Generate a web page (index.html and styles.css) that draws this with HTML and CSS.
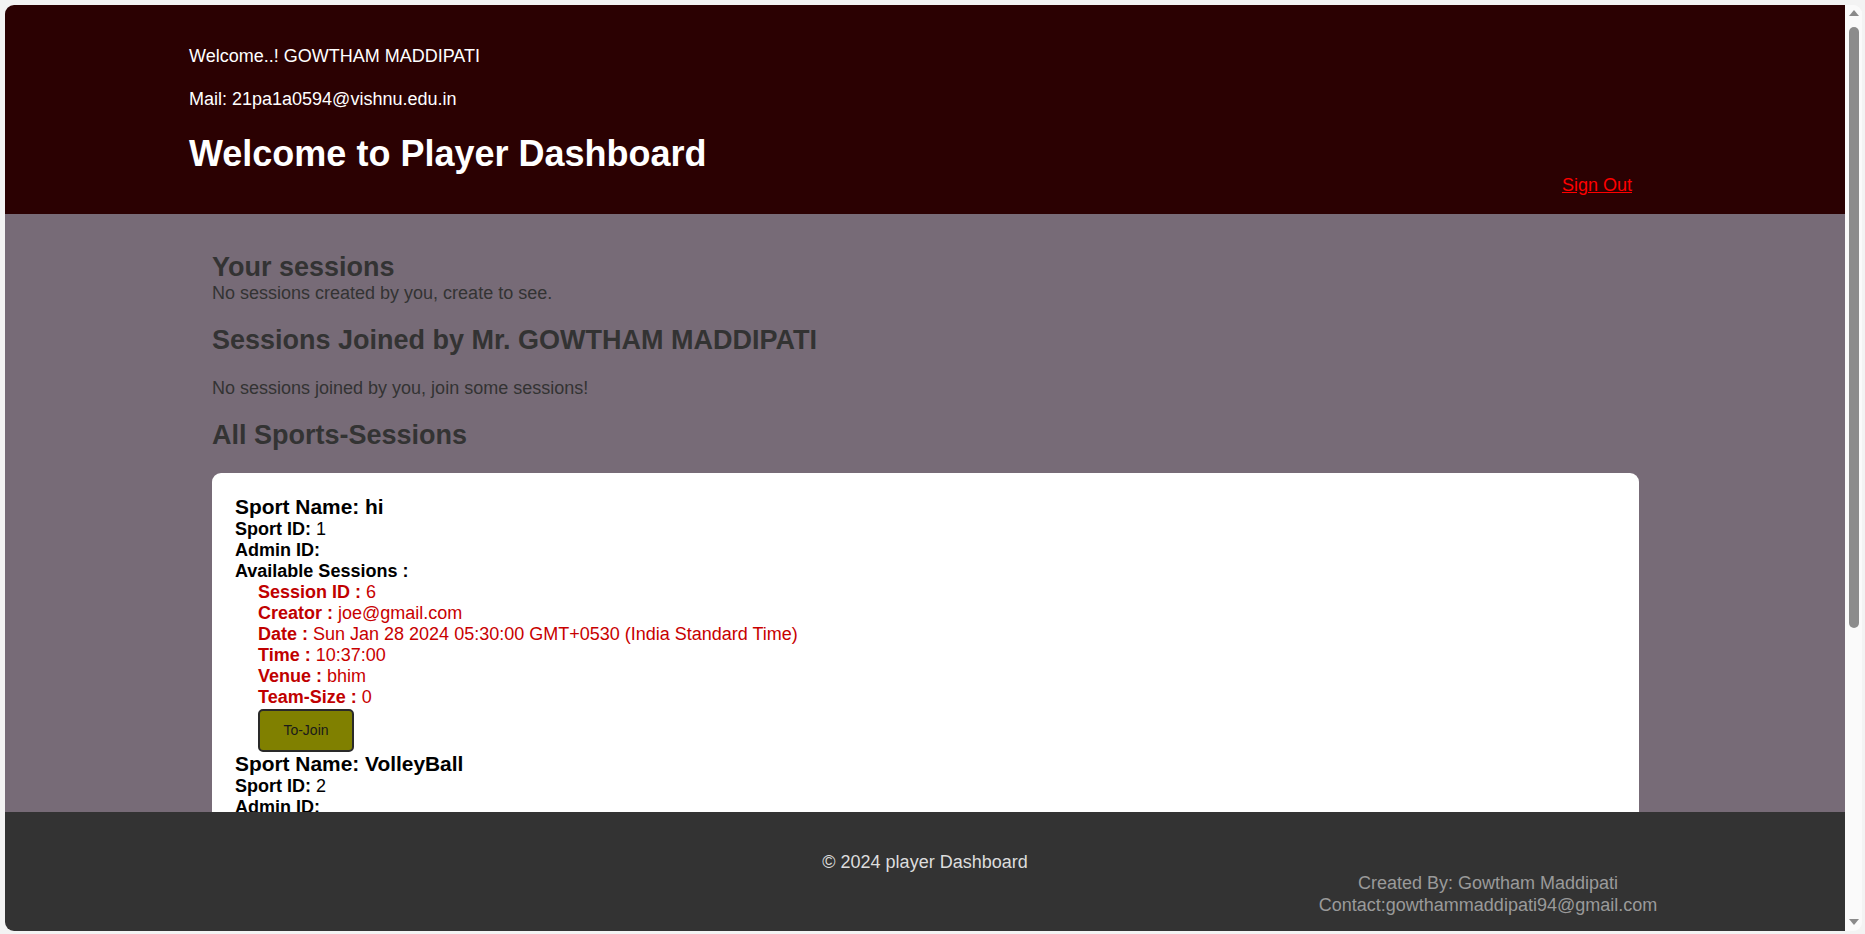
FILE: index.html
```html
<!DOCTYPE html>
<html lang="en">
<head>
<meta charset="utf-8">
<title>Player Dashboard</title>
<link rel="stylesheet" href="styles.css">
</head>
<body>
<div class="window">
  <div class="page">
    <header class="top">
      <div class="top-left">
        <p class="hello">Welcome..! GOWTHAM MADDIPATI</p>
        <p class="mail">Mail: 21pa1a0594@vishnu.edu.in</p>
        <h1 class="title">Welcome to Player Dashboard</h1>
      </div>
      <a class="signout" href="#">Sign Out</a>
    </header>
    <main class="main">
      <h2 class="sec-title">Your sessions</h2>
      <div class="sec-text">No sessions created by you, create to see.</div>
      <h2 class="sec-title">Sessions Joined by Mr. GOWTHAM MADDIPATI</h2>
      <p class="sec-para">No sessions joined by you, join some sessions!</p>
      <h2 class="sec-title">All Sports-Sessions</h2>
      <div class="card">
        <div class="sport">
          <h3 class="sport-name">Sport Name: hi</h3>
          <div class="line"><b>Sport ID:</b> 1</div>
          <div class="line"><b>Admin ID:</b></div>
          <div class="line"><b>Available Sessions :</b></div>
          <div class="sessions">
            <div class="s-line"><b>Session ID :</b> 6</div>
            <div class="s-line"><b>Creator :</b> joe@gmail.com</div>
            <div class="s-line"><b>Date :</b> Sun Jan 28 2024 05:30:00 GMT+0530 (India Standard Time)</div>
            <div class="s-line"><b>Time :</b> 10:37:00</div>
            <div class="s-line"><b>Venue :</b> bhim</div>
            <div class="s-line"><b>Team-Size :</b> 0</div>
            <button class="join" type="button">To-Join</button>
          </div>
        </div>
        <div class="sport">
          <h3 class="sport-name">Sport Name: VolleyBall</h3>
          <div class="line"><b>Sport ID:</b> 2</div>
          <div class="line"><b>Admin ID:</b></div>
          <div class="line"><b>Available Sessions :</b></div>
        </div>
      </div>
    </main>
    <footer class="foot">
      <p class="copy">&copy; 2024 player Dashboard</p>
      <div class="credit">
        <div>Created By: Gowtham Maddipati</div>
        <div>Contact:gowthammaddipati94@gmail.com</div>
      </div>
    </footer>
  </div>
  <div class="scrollbar">
    <span class="arrow-up"></span>
    <span class="thumb"></span>
    <span class="arrow-down"></span>
  </div>
</div>
</body>
</html>
```
FILE: styles.css
```css
html, body {
  margin: 0;
  padding: 0;
}
body {
  background: #f3f3f3;
  font-family: "Liberation Sans", Arial, sans-serif;
  font-size: 18px;
  width: 1865px;
  height: 934px;
  overflow: hidden;
}
.window {
  margin: 5px 0 0 5px;
  width: 1857px;
  height: 926px;
  border-radius: 9px;
  overflow: hidden;
  display: flex;
  background: #fafafa;
}
.page {
  width: 1840px;
  height: 926px;
  display: flex;
  flex-direction: column;
}
.top {
  background: #2b0102;
  height: 209px;
  box-sizing: border-box;
  padding: 41px 213px 18px 184px;
  display: flex;
  justify-content: space-between;
  align-items: flex-end;
  flex-shrink: 0;
}
.top-left {
  color: #ffffff;
}
.hello {
  margin: 0;
  font-size: 18px;
}
.mail {
  margin: 22px 0 0;
  font-size: 18px;
}
.title {
  margin: 23px 0 21px;
  font-size: 36px;
  font-weight: bold;
}
.signout {
  color: #ff0000;
  text-decoration: underline;
  font-size: 18px;
}
.main {
  flex: 1;
  overflow: hidden;
  background: #776b77;
  padding: 16px 206px 0 207px;
  color: #333333;
}
.sec-title {
  font-size: 27px;
  margin: 21.5px 0;
  font-weight: bold;
}
.sec-title:first-child {
  margin-bottom: 0;
}
.sec-text {
  font-size: 18px;
}
.sec-para {
  font-size: 18px;
  margin: 18px 0;
}
.card {
  background: #ffffff;
  border-radius: 9px;
  padding: 22px 22px 40px 23px;
  color: #000000;
}
.sport-name {
  margin: 0;
  font-size: 20.9px;
  font-weight: bold;
}
.line {
  font-size: 18px;
}
.sessions {
  padding-left: 23px;
}
.s-line {
  color: #c80000;
  font-size: 18px;
}
.s-line b {
  color: #c00000;
}
.join {
  margin-top: 1px;
  width: 96px;
  height: 43px;
  background: #808000;
  border: 2px solid #2a2a2a;
  border-radius: 5px;
  color: #1a1a1a;
  font-family: "Liberation Sans", Arial, sans-serif;
  font-size: 14px;
  padding: 0;
  display: block;
}
.foot {
  height: 119px;
  flex-shrink: 0;
  box-sizing: border-box;
  background: #333333;
  padding-top: 40px;
}
.copy {
  margin: 0;
  text-align: center;
  color: #dddddd;
  font-size: 18px;
}
.credit {
  width: 400px;
  margin: 0 157px 0 auto;
  text-align: center;
  color: #9a9a9a;
  font-size: 18px;
  line-height: 21.5px;
}
.scrollbar {
  width: 17px;
  height: 926px;
  background: #fafafa;
  position: relative;
}
.arrow-up {
  position: absolute;
  left: 4px;
  top: 5px;
  width: 0;
  height: 0;
  border-left: 5px solid transparent;
  border-right: 5px solid transparent;
  border-bottom: 6px solid #8a8a8a;
}
.arrow-down {
  position: absolute;
  left: 4px;
  bottom: 6px;
  width: 0;
  height: 0;
  border-left: 5px solid transparent;
  border-right: 5px solid transparent;
  border-top: 6px solid #8a8a8a;
}
.thumb {
  position: absolute;
  left: 4px;
  top: 22px;
  width: 10px;
  height: 601px;
  border-radius: 5px;
  background: #8c8c8c;
}
```
